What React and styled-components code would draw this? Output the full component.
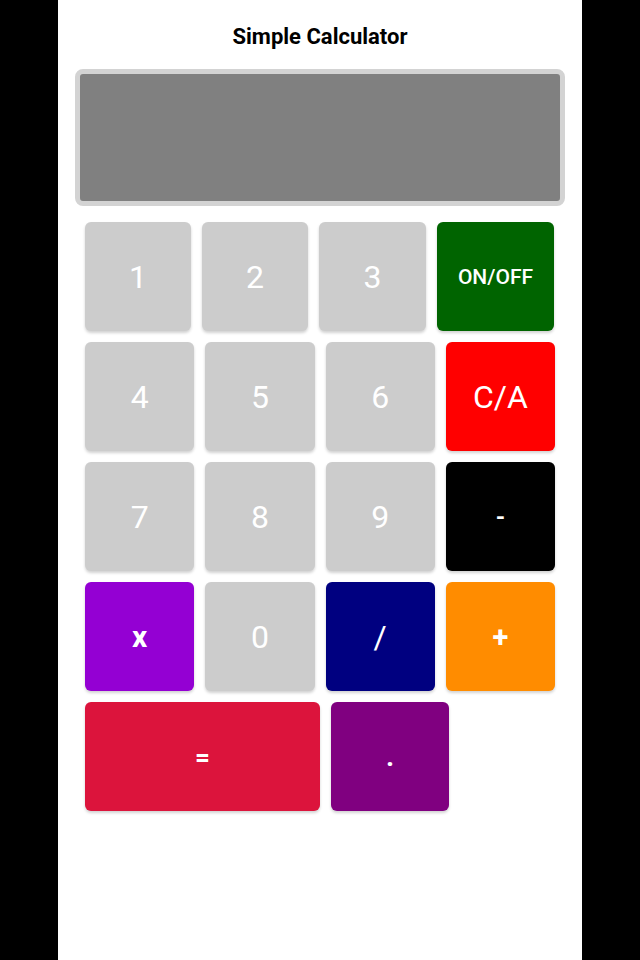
import React from 'react';
import styled, { createGlobalStyle } from 'styled-components';

const Global = createGlobalStyle`
  body {
    margin: 0;
    background: #000;
    font-family: Roboto, "Liberation Sans", sans-serif;
  }
`;

const Screen = styled.div`
  width: 524px;
  min-height: 960px;
  margin: 0 auto;
  background: #fff;
  padding-top: 24px;
  box-sizing: border-box;
`;

const Title = styled.h1`
  margin: 0;
  font-size: 22px;
  line-height: 26px;
  font-weight: 700;
  color: #000;
  text-align: center;
`;

const Display = styled.div`
  margin: 19px 17px 0;
  height: 137px;
  box-sizing: border-box;
  border: 5px solid #d3d3d3;
  border-radius: 8px;
  background: #808080;
`;

const Pad = styled.div`
  margin: 16px 27px 0;
  display: flex;
  flex-direction: column;
  gap: 11px;
`;

const Row = styled.div`
  display: grid;
  grid-template-columns: ${(p) => p.$cols || 'repeat(4, 1fr)'};
  column-gap: 11px;
  height: 109px;
`;

const Key = styled.button`
  border: none;
  border-radius: 6px;
  background: ${(p) => p.$bg || '#cccccc'};
  color: #fff;
  font-family: Roboto, "Liberation Sans", sans-serif;
  font-size: ${(p) => p.$size || 32}px;
  font-weight: ${(p) => p.$weight || 400};
  box-shadow: 0 2px 3px rgba(0, 0, 0, 0.18);
  display: flex;
  align-items: center;
  justify-content: center;
  padding: 0;
`;

const rows = [
  {
    cols: '106px 106px 107px 117px',
    keys: [
      { label: '1' },
      { label: '2' },
      { label: '3' },
      { label: 'ON/OFF', bg: '#006400', size: 21, weight: 500 },
    ],
  },
  {
    keys: [
      { label: '4' },
      { label: '5' },
      { label: '6' },
      { label: 'C/A', bg: '#ff0000' },
    ],
  },
  {
    keys: [
      { label: '7' },
      { label: '8' },
      { label: '9' },
      { label: '-', bg: '#000000', size: 24, weight: 700 },
    ],
  },
  {
    keys: [
      { label: 'x', bg: '#9400d3', size: 30, weight: 700 },
      { label: '0' },
      { label: '/', bg: '#000080' },
      { label: '+', bg: '#ff8c00', size: 29, weight: 700 },
    ],
  },
  {
    cols: '235px 118px',
    keys: [
      { label: '=', bg: '#dc143c', size: 26, weight: 700 },
      { label: '.', bg: '#800080', size: 28, weight: 700 },
    ],
  },
];

export default function App() {
  return (
    <Screen>
      <Global />
      <Title>Simple Calculator</Title>
      <Display />
      <Pad>
        {rows.map((row, i) => (
          <Row key={i} $cols={row.cols}>
            {row.keys.map((k) => (
              <Key key={k.label} $bg={k.bg} $size={k.size} $weight={k.weight}>
                {k.label}
              </Key>
            ))}
          </Row>
        ))}
      </Pad>
    </Screen>
  );
}
